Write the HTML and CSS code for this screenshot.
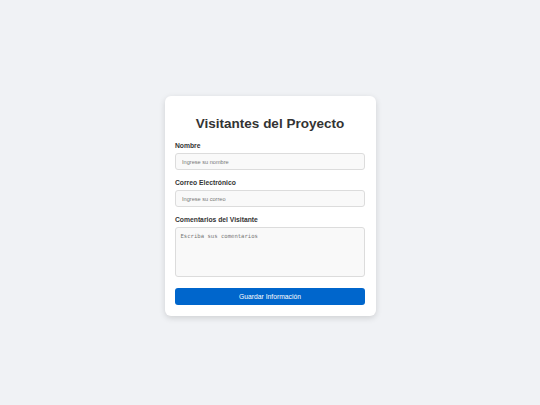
FILE: index.html
```html
<!DOCTYPE html>
<html lang="es">
<head>
<meta charset="utf-8">
<title>Visitantes del Proyecto</title>
<link rel="stylesheet" href="styles.css">
</head>
<body>
  <main class="card">
    <h1 class="title">Visitantes del Proyecto</h1>
    <form class="form">
      <div class="field">
        <label class="label" for="nombre">Nombre</label>
        <input class="input" id="nombre" type="text" placeholder="Ingrese su nombre">
      </div>
      <div class="field">
        <label class="label" for="correo">Correo Electrónico</label>
        <input class="input" id="correo" type="email" placeholder="Ingrese su correo">
      </div>
      <div class="field">
        <label class="label" for="comentarios">Comentarios del Visitante</label>
        <textarea class="textarea" id="comentarios" placeholder="Escriba sus comentarios"></textarea>
      </div>
      <button class="button" type="button">Guardar Información</button>
    </form>
  </main>
</body>
</html>
```
FILE: styles.css
```css
html, body {
  margin: 0;
  padding: 0;
}
body {
  background: #f0f2f5;
  font-family: "Liberation Sans", Arial, sans-serif;
  color: #333;
  min-height: 405px;
  padding-top: 96px;
  box-sizing: border-box;
}
.card {
  width: 211px;
  box-sizing: border-box;
  margin: 0 auto;
  background: #fff;
  border-radius: 6px;
  box-shadow: 0 2px 6px rgba(0, 0, 0, 0.14);
  padding: 20px 10.5px 10.5px;
}
.title {
  margin: 0 0 9.4px;
  font-size: 13.5px;
  line-height: 16px;
  font-weight: bold;
  text-align: center;
  color: #333;
}
.form {
  display: flex;
  flex-direction: column;
}
.field {
  display: flex;
  flex-direction: column;
  margin-bottom: 8px;
}
.label {
  font-size: 6.75px;
  line-height: 9px;
  font-weight: bold;
  color: #333;
  margin-bottom: 3px;
}
.input, .textarea {
  box-sizing: border-box;
  width: 100%;
  border: 0.6px solid #dcdcdc;
  border-radius: 3px;
  background: #f9f9f9;
  margin: 0;
  outline: none;
}
.input {
  height: 17px;
  padding: 0 6px;
  font-family: "Liberation Sans", Arial, sans-serif;
  font-size: 5.6px;
}
.input::placeholder {
  color: #777;
}
.textarea {
  height: 49.5px;
  padding: 5px 4.5px;
  font-family: "DejaVu Sans Mono", monospace;
  font-size: 5.6px;
  resize: none;
  display: block;
}
.textarea::placeholder {
  color: #777;
}
.button {
  margin-top: 3px;
  height: 17.5px;
  border: none;
  border-radius: 3px;
  background: #0066cc;
  color: #fff;
  font-family: "Liberation Sans", Arial, sans-serif;
  font-size: 6.75px;
  padding: 0;
  cursor: pointer;
}
```
